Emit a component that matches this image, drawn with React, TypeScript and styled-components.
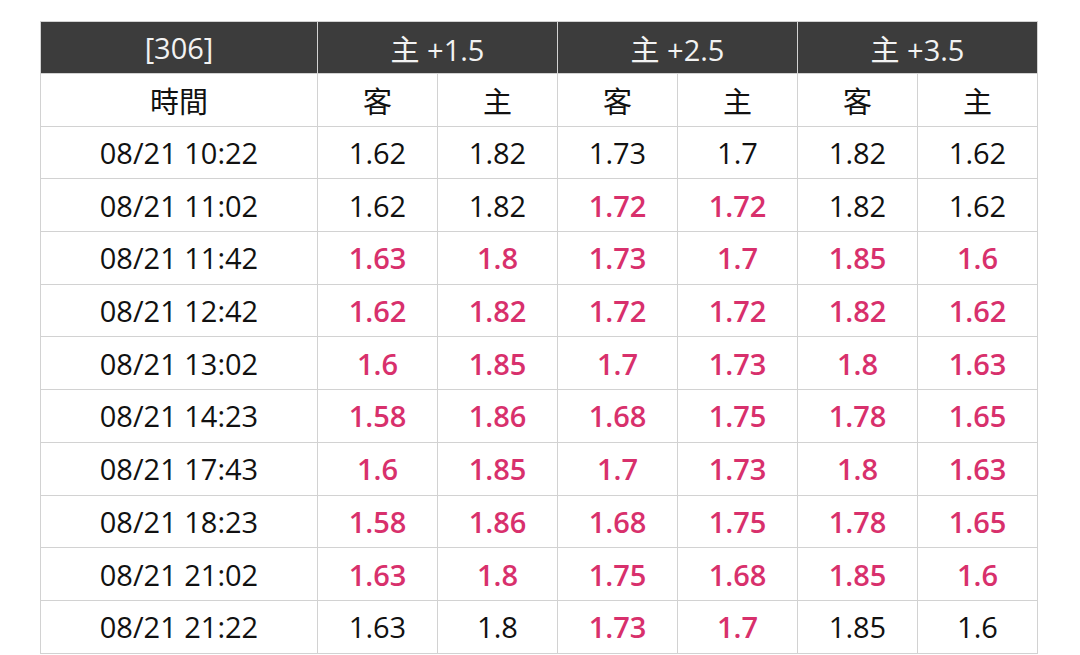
import styled, { createGlobalStyle } from "styled-components";

const headerDark = "#3c3c3c";
const gridLine = "#d2d2d2";
const changed = "#d8306c";

const GlobalStyle = createGlobalStyle`
  body {
    margin: 0;
    background: #ffffff;
    font-family: "Open Sans", "Noto Sans CJK TC", sans-serif;
  }
`;

const Table = styled.table`
  width: 998px;
  margin: 21px 0 0 40px;
  border-collapse: collapse;
  table-layout: fixed;
  font-size: 29px;
  color: #111;
`;

const HeadCell = styled.th`
  height: 51px;
  padding: 0;
  background: ${headerDark};
  color: #f2f2f2;
  font-weight: 400;
  border: 1px solid ${gridLine};
  text-align: center;
`;

const Cell = styled.td<{ $hot?: boolean }>`
  height: 51.7px;
  padding: 0;
  border: 1px solid ${gridLine};
  text-align: center;
  color: ${(p) => (p.$hot ? changed : "#111")};
  font-weight: ${(p) => (p.$hot ? 600 : 400)};
`;

type Row = { time: string; odds: string[]; hot: boolean[] };

const A = [true, true, true, true, true, true];
const mid = [false, false, true, true, false, false];
const none = [false, false, false, false, false, false];

const rows: Row[] = [
  { time: "08/21 10:22", odds: ["1.62", "1.82", "1.73", "1.7", "1.82", "1.62"], hot: none },
  { time: "08/21 11:02", odds: ["1.62", "1.82", "1.72", "1.72", "1.82", "1.62"], hot: mid },
  { time: "08/21 11:42", odds: ["1.63", "1.8", "1.73", "1.7", "1.85", "1.6"], hot: A },
  { time: "08/21 12:42", odds: ["1.62", "1.82", "1.72", "1.72", "1.82", "1.62"], hot: A },
  { time: "08/21 13:02", odds: ["1.6", "1.85", "1.7", "1.73", "1.8", "1.63"], hot: A },
  { time: "08/21 14:23", odds: ["1.58", "1.86", "1.68", "1.75", "1.78", "1.65"], hot: A },
  { time: "08/21 17:43", odds: ["1.6", "1.85", "1.7", "1.73", "1.8", "1.63"], hot: A },
  { time: "08/21 18:23", odds: ["1.58", "1.86", "1.68", "1.75", "1.78", "1.65"], hot: A },
  { time: "08/21 21:02", odds: ["1.63", "1.8", "1.75", "1.68", "1.85", "1.6"], hot: A },
  { time: "08/21 21:22", odds: ["1.63", "1.8", "1.73", "1.7", "1.85", "1.6"], hot: mid },
];

const lines = ["主 +1.5", "主 +2.5", "主 +3.5"];

export default function App() {
  return (
    <>
      <GlobalStyle />
      <Table>
        <colgroup>
          <col style={{ width: 277 }} />
          {Array.from({ length: 6 }).map((_, i) => (
            <col key={i} style={{ width: 120 }} />
          ))}
        </colgroup>
        <thead>
          <tr>
            <HeadCell>[306]</HeadCell>
            {lines.map((l) => (
              <HeadCell key={l} colSpan={2}>
                {l}
              </HeadCell>
            ))}
          </tr>
        </thead>
        <tbody>
          <tr>
            <Cell>時間</Cell>
            {lines.map((l) => [
              <Cell key={l + "a"}>客</Cell>,
              <Cell key={l + "h"}>主</Cell>,
            ])}
          </tr>
          {rows.map((r) => (
            <tr key={r.time}>
              <Cell>{r.time}</Cell>
              {r.odds.map((o, i) => (
                <Cell key={i} $hot={r.hot[i]}>
                  {o}
                </Cell>
              ))}
            </tr>
          ))}
        </tbody>
      </Table>
    </>
  );
}
